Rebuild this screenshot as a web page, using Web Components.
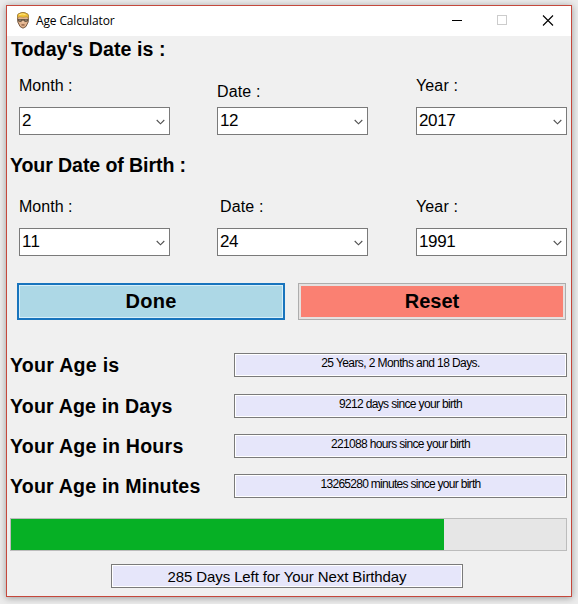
<!DOCTYPE html>
<html lang="en">
<head>
<meta charset="utf-8">
<title>Age Calculator</title>
<style>
html,body{margin:0;height:100%}
body{background:#ececec;overflow:hidden;font-family:"Liberation Sans",Arial,sans-serif;color:#000;padding:5px 6px;box-sizing:border-box}
</style>
</head>
<body>
<age-calculator></age-calculator>
<script>
class UiElement extends HTMLElement{
  connectedCallback(){
    if(this.shadowRoot)return;
    this.attachShadow({mode:'open'}).innerHTML=this.render();
    this.ready&&this.ready();
  }
  attr(n,d=''){return this.getAttribute(n)??d}
}

/* Single line of text, tracked out or in to span a given width. */
customElements.define('fit-text',class extends UiElement{
  render(){return `<style>:host{display:inline-block;white-space:pre}span{display:inline-block}</style><span>${this.attr('text')}</span>`}
  ready(){
    const s=this.shadowRoot.querySelector('span'),w=parseFloat(this.attr('w'));
    if(w){const n=s.getBoundingClientRect().width;s.style.letterSpacing=((w-n)/this.attr('text').length)+'px'}
  }
});

customElements.define('title-bar',class extends UiElement{
  render(){return `<style>
    :host{display:flex;height:30px;background:#fff;align-items:center;box-sizing:border-box;padding-left:9px;font:12px/16px "Open Sans","Noto Sans",sans-serif}
    .face{width:14px;height:17px;margin-right:6px;margin-top:-1px}
    .name{flex:1}
    .controls{display:flex;align-self:stretch}
    .controls svg{width:45px;height:30px;display:block}
  </style>
  <svg class="face" viewBox="0 0 14 17">
    <path d="M1.6 5.5Q1 1.5 4 1.2 7-.3 10 1.2 13 1.6 12.4 5.5L12.2 10 10 14.5 7 16.2 4 14.5 1.8 10Z" fill="#e2b48f" stroke="#5b3b22" stroke-width=".8"/>
    <path d="M1.6 6Q1 1.6 4 1.3 7-.2 10 1.3 13 1.7 12.4 6L11 4.8 7 5.3 3 4.8Z" fill="#f2c437" stroke="#9a742a" stroke-width=".5"/>
    <path d="M3 2.8Q6 1.2 9.5 2.5" fill="none" stroke="#ffe78a"/>
    <path d="M1.6 7H12.4V8.2Q11.6 10 9.8 9.9 8.2 9.8 7.4 8.4H6.6Q5.8 9.8 4.2 9.9 2.4 10 1.6 8.2Z" fill="#655544"/>
    <path d="M3 8.2H5M9 8.2h2" stroke="#a99378" stroke-width=".8"/>
    <path d="M5 12.7Q7 11.8 9 12.7L8.3 13.5H5.7Z" fill="#7d4b32"/>
    <path d="M7 9v2.3" stroke="#f3cfae"/>
  </svg>
  <fit-text class="name" text="Age Calculator" w="78.5"></fit-text>
  <div class="controls">
    <svg viewBox="0 0 45 30"><path d="M16 14.5h10" stroke="#000"/></svg>
    <svg viewBox="0 0 45 30"><rect x="16.5" y="9.5" width="9" height="9" fill="none" stroke="#ccc"/></svg>
    <svg viewBox="0 0 45 30"><path d="M17 9.5l10 10M27 9.5l-10 10" stroke="#000" stroke-width="1.1"/></svg>
  </div>`}
});

customElements.define('section-title',class extends UiElement{
  render(){return `<style>:host{display:block;height:24px;font-weight:bold;font-size:19.6px;line-height:25px}</style><fit-text text="${this.attr('text')}" w="${this.attr('w')}"></fit-text>`}
});

customElements.define('combo-box',class extends UiElement{
  render(){return `<style>
    :host{display:block;width:151px}
    .label{height:20px;font-size:16px;line-height:20px;margin-bottom:11px}
    :host([low]) .label{margin-top:6px;margin-bottom:5px}
    :host([inset]) .label{padding-left:3px}
    .box{display:flex;justify-content:space-between;align-items:center;box-sizing:border-box;height:28px;background:#fff;border:1px solid #7a7a7a;padding:0 4px 0 2px;font-size:17px;line-height:26px}
    svg{margin-top:2px}
  </style>
  <div class="label"><fit-text text="${this.attr('label')}" w="${this.attr('w')}"></fit-text></div>
  <div class="box"><fit-text text="${this.attr('value')}" w="${this.attr('value').length*9.1}"></fit-text><svg width="9" height="6" viewBox="0 0 9 6"><path d="M.7 1L4.5 4.8 8.3 1" fill="none" stroke="#505050" stroke-width="1.1"/></svg></div>`}
});

customElements.define('date-row',class extends UiElement{
  render(){return `<style>:host{display:grid;grid-template-columns:198px 199px 151px;padding-left:12px;height:59px}</style><slot></slot>`}
});

customElements.define('push-button',class extends UiElement{
  render(){return `<style>
    :host{display:flex;justify-content:center;box-sizing:border-box;width:268px;height:37px;padding-top:5px;font-weight:bold;font-size:20px;line-height:25px}
    :host([kind=done]){border:2px solid #1874bd;background:#add8e6;box-shadow:inset 0 0 0 1px #d5effa;padding-top:4px}
    :host([kind=reset]){border:1px solid #adadad;background:#fa8072;box-shadow:inset 0 0 0 2px #e5e1e0}
  </style><fit-text text="${this.attr('text')}" w="${this.attr('w')}"></fit-text>`}
});

customElements.define('read-only-field',class extends UiElement{
  render(){return `<style>
    :host{display:flex;justify-content:center;box-sizing:border-box;width:333px;height:24px;border:1px solid #7a7a7a;background:#e6e6fa;box-shadow:inset 0 0 0 1px #fff;font-size:12px;line-height:18px}
    :host([large]){width:352px;font-size:15px;line-height:24px}
  </style><fit-text text="${this.attr('text')}" w="${this.attr('w')}"></fit-text>`}
});

customElements.define('result-row',class extends UiElement{
  render(){return `<style>:host{display:flex;justify-content:space-between;align-items:flex-start;padding:0 4px 0 3px;height:24px}</style>
  <section-title text="${this.attr('label')}" w="${this.attr('lw')}"></section-title><read-only-field text="${this.attr('value')}" w="${this.attr('w')}"></read-only-field>`}
});

customElements.define('progress-track',class extends UiElement{
  render(){return `<style>
    :host{display:block;box-sizing:border-box;height:33px;border:1px solid #bcbcbc;background:#e6e6e6}
    div{height:100%;width:${this.attr('fill')};background:#06b025}
  </style><div></div>`}
});

customElements.define('age-calculator',class extends UiElement{
  render(){return `<style>
    :host{display:block;box-sizing:border-box;width:566px;height:592px;border:1px solid #c5483c;background:#f0f0f0;box-shadow:0 1px 7px rgba(0,0,0,.35)}
    section-title{padding-left:4px}
    .first{padding-top:1px;margin-bottom:15px}
    .second{margin:18px 0 20px;padding-left:3px}
    .buttons{display:flex;gap:13px;padding-left:10px;margin-top:27px}
    .results{display:grid;gap:16px;margin-top:33px}
    .results :first-child{margin-bottom:1px}
    progress-track{margin:20px 4px 13px 3px}
    read-only-field{margin-left:104px}
  </style>
  <title-bar></title-bar>
  <section-title class="first" text="Today's Date is :" w="154.5"></section-title>
  <date-row>
    <combo-box label="Month :" value="2" w="53.5"></combo-box>
    <combo-box label="Date :" value="12" w="43.5" low></combo-box>
    <combo-box label="Year :" value="2017" w="42"></combo-box>
  </date-row>
  <section-title class="second" text="Your Date of Birth :" w="176"></section-title>
  <date-row>
    <combo-box label="Month :" value="11" w="53.5"></combo-box>
    <combo-box label="Date :" value="24" w="43.5" inset></combo-box>
    <combo-box label="Year :" value="1991" w="42"></combo-box>
  </date-row>
  <div class="buttons">
    <push-button kind="done" text="Done" w="51"></push-button>
    <push-button kind="reset" text="Reset" w="54.5"></push-button>
  </div>
  <div class="results">
    <result-row label="Your Age is" lw="109.5" value="25 Years, 2 Months and 18 Days." w="158.5"></result-row>
    <result-row label="Your Age in Days" lw="162.5" value="9212 days since your birth" w="123"></result-row>
    <result-row label="Your Age in Hours" lw="173.5" value="221088 hours since your birth" w="139"></result-row>
    <result-row label="Your Age in Minutes" lw="190.5" value="13265280 minutes since your birth" w="160"></result-row>
  </div>
  <progress-track fill="433px"></progress-track>
  <read-only-field large text="285 Days Left for Your Next Birthday" w="239"></read-only-field>`}
});
</script>
</body>
</html>
